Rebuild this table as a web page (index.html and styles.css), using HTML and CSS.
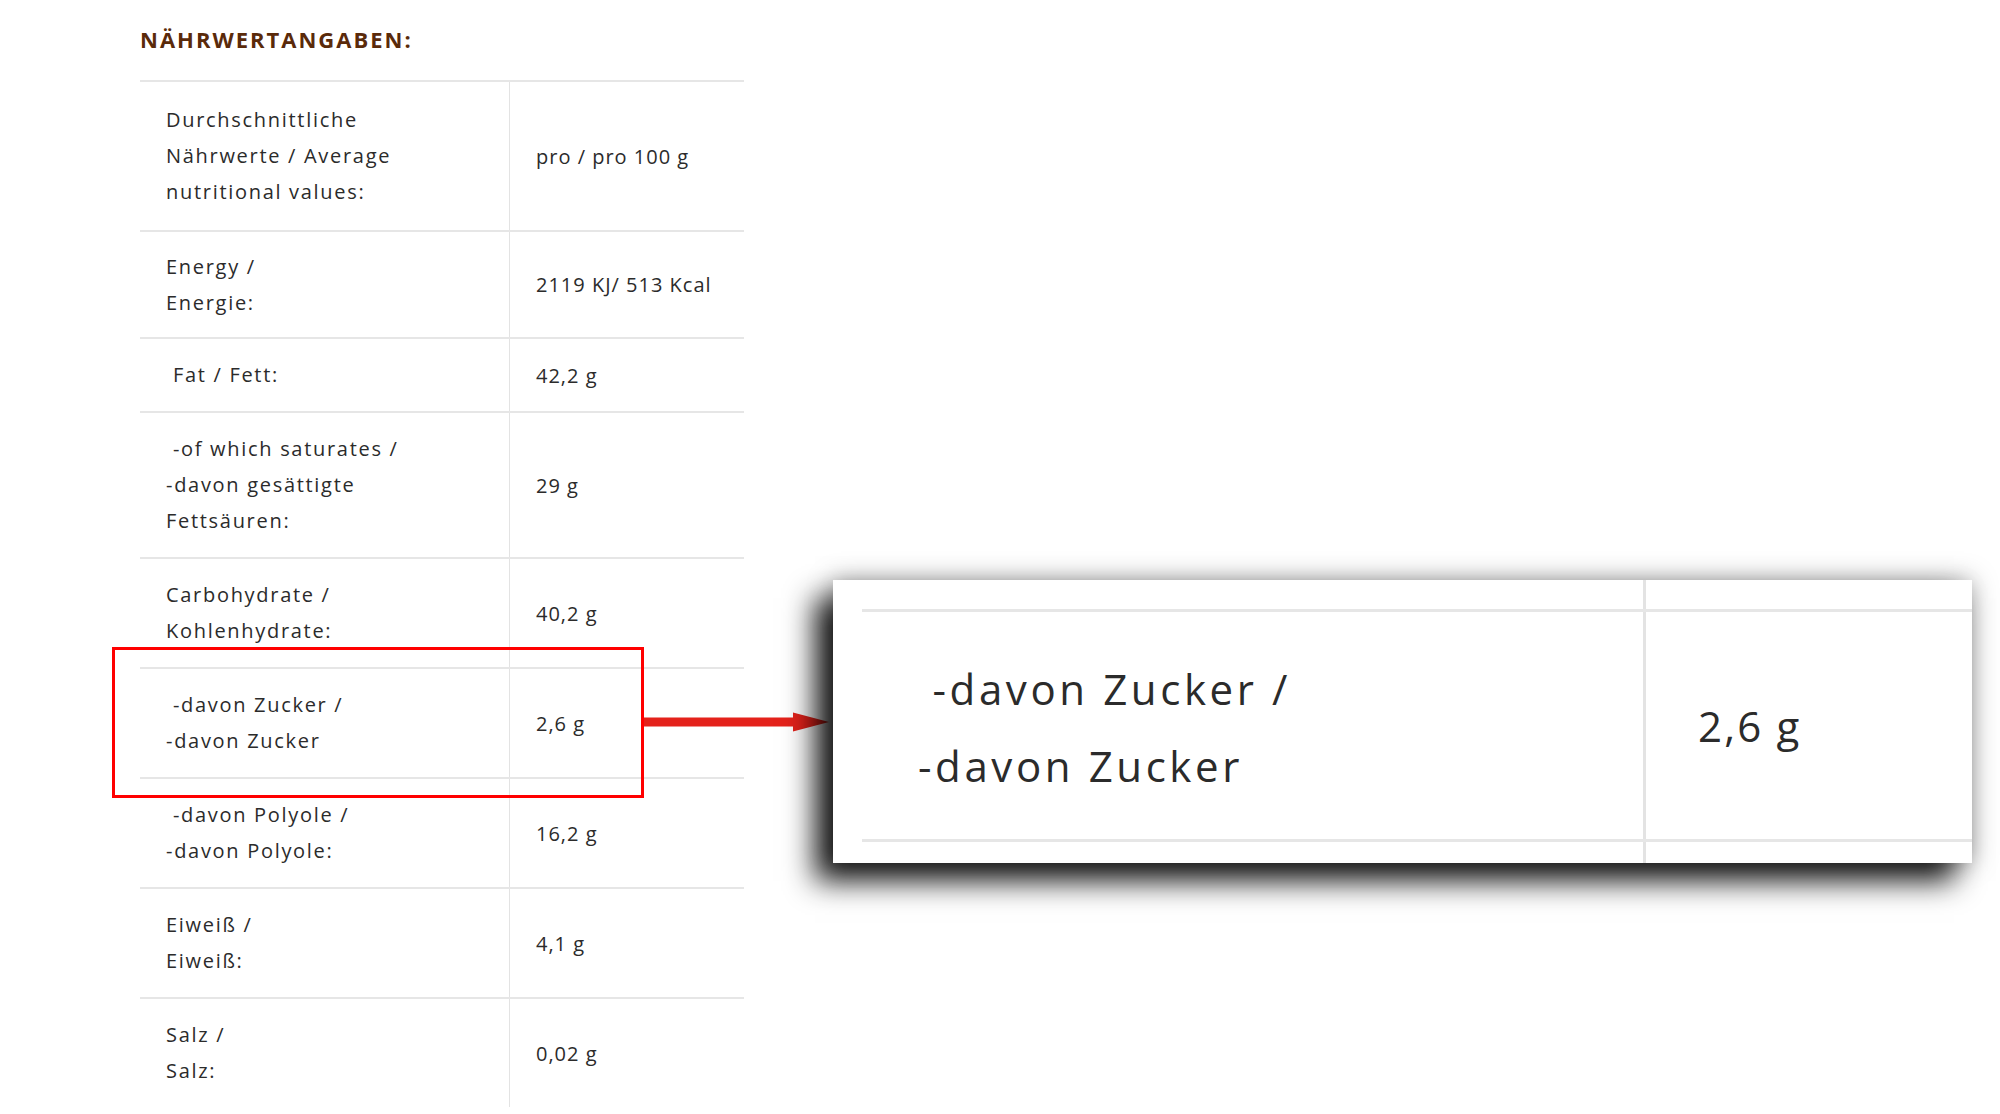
FILE: index.html
```html
<!DOCTYPE html>
<html lang="de">
<head>
<meta charset="utf-8">
<title>Nährwertangaben</title>
<link rel="stylesheet" href="styles.css">
</head>
<body>
<div class="page">
  <h2 class="title">NÄHRWERTANGABEN:</h2>
  <div class="nutri">
    <div class="row row--head">
      <div class="label">Durchschnittliche<br>Nährwerte / Average<br>nutritional values:</div>
      <div class="value">pro / pro 100 g</div>
    </div>
    <div class="row row--tight">
      <div class="label">Energy /<br>Energie:</div>
      <div class="value">2119 KJ/ 513 Kcal</div>
    </div>
    <div class="row">
      <div class="label">&nbsp;Fat / Fett:</div>
      <div class="value">42,2 g</div>
    </div>
    <div class="row">
      <div class="label">&nbsp;-of which saturates /<br>-davon gesättigte<br>Fettsäuren:</div>
      <div class="value">29 g</div>
    </div>
    <div class="row">
      <div class="label">Carbohydrate /<br>Kohlenhydrate:</div>
      <div class="value">40,2 g</div>
    </div>
    <div class="row">
      <div class="label">&nbsp;-davon Zucker /<br>-davon Zucker</div>
      <div class="value">2,6 g</div>
    </div>
    <div class="row">
      <div class="label">&nbsp;-davon Polyole /<br>-davon Polyole:</div>
      <div class="value">16,2 g</div>
    </div>
    <div class="row">
      <div class="label">Eiweiß /<br>Eiweiß:</div>
      <div class="value">4,1 g</div>
    </div>
    <div class="row">
      <div class="label">Salz /<br>Salz:</div>
      <div class="value">0,02 g</div>
    </div>
  </div>

  <div class="highlight"></div>
  <svg class="arrow" viewBox="0 0 186 24" width="186" height="24">
    <rect x="0" y="7.5" width="152" height="9" fill="#e4221b"/>
    <polygon points="149,2.5 185,12 149,21.5" fill="#e4221b"/>
  </svg>

  <div class="zoom">
    <div class="ztable">
      <div class="zstub zstub--top"><div class="zcell"></div><div></div></div>
      <div class="zrow">
        <div class="zlabel">&nbsp;-davon Zucker /<br>-davon Zucker</div>
        <div class="zvalue">2,6 g</div>
      </div>
      <div class="zstub zstub--bottom"><div class="zcell"></div><div></div></div>
    </div>
  </div>
</div>
</body>
</html>
```
FILE: styles.css
```css
html, body {
  margin: 0;
  padding: 0;
  background: #ffffff;
}

body {
  width: 2000px;
  height: 1114px;
  overflow: hidden;
  font-family: "Open Sans", "DejaVu Sans", sans-serif;
  color: #2b2b2b;
}

.page {
  position: relative;
  padding: 25px 0 0 140px;
}

.title {
  margin: 0 0 27px 0;
  font-size: 22px;
  line-height: 28px;
  font-weight: 700;
  letter-spacing: 2px;
  color: #5a2a0a;
}

.nutri {
  width: 604px;
  font-size: 20px;
  letter-spacing: 1.7px;
}

.row {
  display: grid;
  grid-template-columns: 370px 1fr;
  border-top: 2px solid #e6e6e6;
}

.label {
  padding: 18px 20px 18px 26px;
  line-height: 36px;
  border-right: 1px solid #e3e3e3;
  white-space: nowrap;
}

.row--head .label {
  padding-top: 20px;
  padding-bottom: 20px;
}

.row--tight .label {
  padding-top: 16.5px;
  padding-bottom: 16.5px;
}

.value {
  display: flex;
  align-items: center;
  padding: 0 0 0 26px;
  letter-spacing: 1px;
  white-space: nowrap;
}

/* annotation overlays */
.highlight {
  position: absolute;
  left: 112px;
  top: 647px;
  width: 532px;
  height: 151px;
  box-sizing: border-box;
  border: 3px solid #ff0000;
}

.arrow {
  position: absolute;
  left: 644px;
  top: 710px;
  display: block;
}

.zoom {
  position: absolute;
  left: 833px;
  top: 580px;
  width: 1139px;
  height: 283px;
  overflow: hidden;
  background: #ffffff;
  box-shadow: -18px 18px 28px rgba(0, 0, 0, 0.9), 0 0 24px rgba(0, 0, 0, 0.35);
}

.ztable {
  margin-left: 29px;
  width: 1300px;
  font-size: 42px;
  letter-spacing: 3.6px;
}

.zstub,
.zrow {
  display: grid;
  grid-template-columns: 784px 1fr;
}

.zstub--top {
  height: 29px;
}

.zstub--bottom {
  height: 21px;
}

.zcell {
  border-right: 3px solid #e3e3e3;
}

.zrow {
  border-top: 3px solid #e6e6e6;
  border-bottom: 3px solid #e6e6e6;
}

.zlabel {
  padding: 38px 20px 35px 56px;
  line-height: 77px;
  border-right: 3px solid #e3e3e3;
  white-space: nowrap;
}

.zvalue {
  display: flex;
  align-items: center;
  padding-left: 52px;
  letter-spacing: 2.2px;
  white-space: nowrap;
}
```
